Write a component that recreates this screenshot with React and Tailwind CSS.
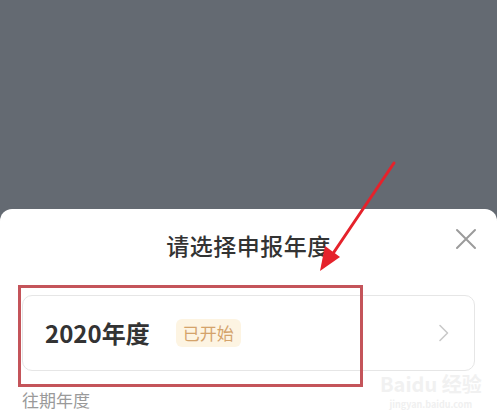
const font = { fontFamily: '"Noto Sans CJK SC", "Noto Sans", sans-serif' }

function CloseIcon() {
  return (
    <svg width="22" height="22" viewBox="0 0 22 22" fill="none">
      <path d="M2 2 L20 20 M20 2 L2 20" stroke="#9b9b9b" strokeWidth="2" strokeLinecap="round" />
    </svg>
  )
}

function Chevron() {
  return (
    <svg width="12" height="18" viewBox="0 0 12 18" fill="none">
      <path d="M2 1.5 L9.5 9 L2 16.5" stroke="#c9c9c9" strokeWidth="1.6" strokeLinecap="round" strokeLinejoin="round" />
    </svg>
  )
}

function Arrow() {
  return (
    <svg className="pointer-events-none absolute left-0 top-0" width="497" height="420" viewBox="0 0 497 420">
      <line x1="394" y1="163" x2="332" y2="255" stroke="#e5222b" strokeWidth="3" strokeLinecap="round" />
      <path d="M320 271 L325 246 L340 257 Z" fill="#e5222b" />
    </svg>
  )
}

export default function App() {
  return (
    <div className="relative flex h-[420px] w-[497px] flex-col overflow-hidden bg-[#646a72]" style={font}>
      <div className="h-[209px] shrink-0" />
      <div className="flex-1 rounded-t-[12px] bg-white px-[22px]">
        <div className="relative flex h-[72px] items-center justify-center">
          <div className="text-[23px] font-medium tracking-[0.5px] text-[#333333]">请选择申报年度</div>
          <button className="absolute right-[-2px] top-[19px]">
            <CloseIcon />
          </button>
        </div>
        <div className="mt-[14px] flex h-[76px] items-center rounded-[10px] border border-[#e6e6e6] pl-[22px] pr-[24px]">
          <div className="text-[24px] font-bold text-[#333333]">2020年度</div>
          <div className="ml-[26px] rounded-[6px] bg-[#fdf4e2] px-[7px] py-[1px] text-[17px] text-[#d4a36b]">已开始</div>
          <div className="ml-auto">
            <Chevron />
          </div>
        </div>
        <div className="mt-[16px] text-[17px] text-[#9a9a9a]">往期年度</div>
      </div>

      <div className="pointer-events-none absolute left-[18px] top-[285px] h-[102px] w-[345px] border-[3px] border-[#c4545a]" />
      <Arrow />

      <div className="pointer-events-none absolute left-[380px] top-[374px] flex flex-col items-center gap-[6px]">
        <div className="text-[20px] font-bold leading-[20px] text-[#f1f1f1]">Baidu 经验</div>
        <div className="text-[9px] font-bold leading-[10px] text-[#f0f0f0]">jingyan.baidu.com</div>
      </div>
    </div>
  )
}
